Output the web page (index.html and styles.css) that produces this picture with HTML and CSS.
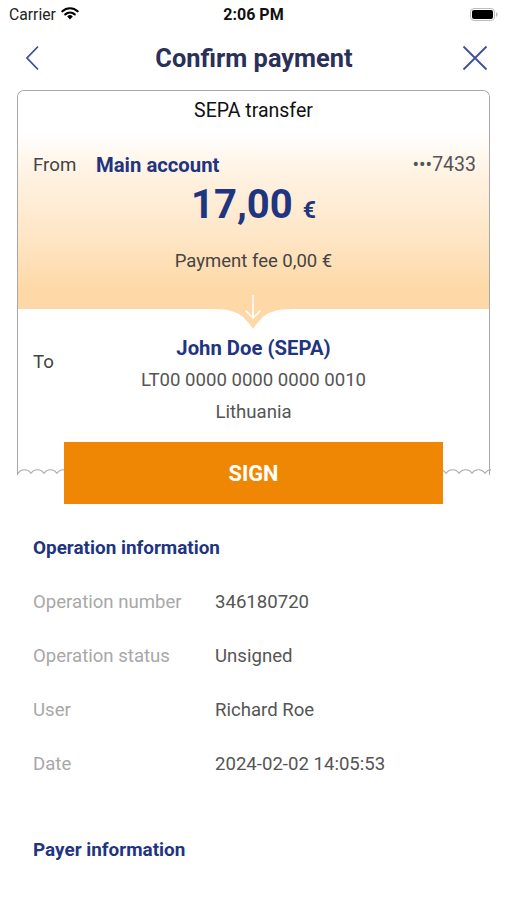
FILE: index.html
```html
<!DOCTYPE html>
<html lang="en">
<head>
<meta charset="utf-8">
<title>Confirm payment</title>
<link rel="stylesheet" href="styles.css">
</head>
<body>
<div class="screen">
  <div class="status-bar">
    <div class="status-left">
      <span class="carrier">Carrier</span>
      <svg class="wifi" width="18" height="13" viewBox="0 0 18 13">
        <path d="M9 12.5 L6.2 9.4 A4 4 0 0 1 11.8 9.4 Z" fill="#000"/>
        <path d="M4.3 7.4 A6.8 6.8 0 0 1 13.7 7.4" fill="none" stroke="#000" stroke-width="2.2" stroke-linecap="round"/>
        <path d="M1.4 4.3 A11 11 0 0 1 16.6 4.3" fill="none" stroke="#000" stroke-width="2.2" stroke-linecap="round"/>
      </svg>
    </div>
    <div class="status-time">2:06 PM</div>
    <div class="status-right">
      <svg width="28" height="13" viewBox="0 0 28 13">
        <rect x="0.5" y="0.5" width="24" height="12" rx="3.5" fill="none" stroke="#bdbdbd" stroke-width="1"/>
        <rect x="2" y="2" width="21" height="9" rx="2" fill="#000"/>
        <path d="M26 4.3 a1.6 2.2 0 0 1 0 4.4 z" fill="#bdbdbd"/>
      </svg>
    </div>
  </div>

  <div class="nav">
    <svg class="nav-icon" width="24" height="26" viewBox="0 0 24 26">
      <path d="M16 1.5 L5 13 L16 24.5" fill="none" stroke="#3f4d9a" stroke-width="1.8"/>
    </svg>
    <h1 class="nav-title">Confirm payment</h1>
    <svg class="nav-icon" width="26" height="26" viewBox="0 0 26 26">
      <path d="M1.5 1.5 L24.5 24.5 M24.5 1.5 L1.5 24.5" fill="none" stroke="#3f4d9a" stroke-width="1.8"/>
    </svg>
  </div>

  <div class="card">
    <div class="card-top">
      <div class="card-type">SEPA transfer</div>
      <div class="from-row">
        <span class="from-label">From</span>
        <span class="from-account">Main account</span>
        <span class="from-number">•••7433</span>
      </div>
      <div class="amount">17,00 <span class="currency">€</span></div>
      <div class="fee">Payment fee 0,00 €</div>
    </div>
    <div class="card-bottom">
      <svg class="notch" width="80" height="36" viewBox="0 0 80 36">
        <path d="M0 14 C16 14 26 17 32 24 Q37 29 40 34 Q43 29 48 24 C54 17 64 14 80 14 Z" fill="#fed8a6"/>
        <path d="M40 0 V23 M32.5 15.5 L40 23 L47.5 15.5" fill="none" stroke="#ffffff" stroke-width="1.5"/>
      </svg>
      <div class="to-grid">
        <span class="to-label">To</span>
        <div class="recipient">
          <div class="recipient-name">John Doe (SEPA)</div>
          <div class="recipient-line">LT00 0000 0000 0000 0010</div>
          <div class="recipient-line">Lithuania</div>
        </div>
        <span></span>
      </div>
    </div>
    <svg class="wave" width="475" height="8" viewBox="0 0 475 8">
      <defs>
        <pattern id="wv" width="13" height="8" patternUnits="userSpaceOnUse" x="1">
          <path d="M0 6.5 C3 1.5 10 1.5 13 6.5" fill="none" stroke="#a8a8a8" stroke-width="1.2"/>
        </pattern>
      </defs>
      <rect x="0" y="0" width="475" height="8" fill="url(#wv)"/>
    </svg>
  </div>

  <button class="sign-btn">SIGN</button>

  <section class="info">
    <h2 class="info-title">Operation information</h2>
    <div class="info-row"><span class="info-label">Operation number</span><span class="info-value">346180720</span></div>
    <div class="info-row"><span class="info-label">Operation status</span><span class="info-value">Unsigned</span></div>
    <div class="info-row"><span class="info-label">User</span><span class="info-value">Richard Roe</span></div>
    <div class="info-row"><span class="info-label">Date</span><span class="info-value">2024-02-02 14:05:53</span></div>
    <h2 class="info-title payer">Payer information</h2>
  </section>
</div>
</body>
</html>
```

FILE: styles.css
```css
* { box-sizing: border-box; }

html, body {
  margin: 0;
  padding: 0;
  background: #ffffff;
}

body {
  font-family: Roboto, "Liberation Sans", Arial, sans-serif;
  color: #333;
}

.screen {
  width: 507px;
  height: 900px;
  overflow: hidden;
  background: #fff;
}

/* status bar */
.status-bar {
  height: 28px;
  display: grid;
  grid-template-columns: 1fr auto 1fr;
  align-items: center;
  padding: 0 9px;
}
.status-left {
  display: flex;
  align-items: center;
  gap: 5px;
}
.carrier {
  font-size: 15.7px;
  color: #222;
}
.wifi { margin-top: -2px; }
.status-time {
  font-size: 16px;
  font-weight: 700;
  color: #111;
}
.status-right {
  display: flex;
  justify-content: flex-end;
}

/* nav */
.nav {
  height: 60px;
  display: flex;
  align-items: center;
  justify-content: space-between;
  padding: 0 19px 0 22px;
}
.nav-title {
  margin: 0;
  font-size: 25.4px;
  font-weight: 700;
  color: #2b3058;
}

/* card */
.card {
  margin: 2px 17px 0;
  border: 1.5px solid #a8a8a8;
  border-bottom: none;
  border-radius: 7px 7px 0 0;
  position: relative;
}
.card-top {
  border-radius: 6px 6px 0 0;
  background: linear-gradient(to bottom, #ffffff 0px, #ffffff 42px, #fff3e4 80px, #fee5c4 150px, #fed8a6 200px, #fed8a6 100%);
  padding: 10px 0 38px;
  text-align: center;
}
.card-type {
  font-size: 19.5px;
  line-height: 20px;
  color: #111;
}
.from-row {
  margin-top: 33px;
  display: flex;
  align-items: center;
  padding: 0 13px 0 15px;
  line-height: 22px;
}
.from-label {
  color: #444;
  width: 63px;
  font-size: 18.7px;
  text-align: left;
}
.from-account {
  color: #1f3580;
  font-weight: 700;
  font-size: 20.3px;
  flex: 1;
  text-align: left;
}
.from-number {
  color: #555;
  font-size: 19.5px;
}
.amount {
  margin-top: 6px;
  font-size: 40px;
  line-height: 46px;
  font-weight: 700;
  color: #1f3580;
}
.currency {
  font-size: 23px;
}
.fee {
  margin-top: 17px;
  font-size: 18.5px;
  line-height: 20px;
  color: #444;
}
.card-bottom {
  position: relative;
  padding: 23px 0 39px;
}
.notch {
  position: absolute;
  top: -14px;
  left: 50%;
  margin-left: -40.5px;
}
.to-grid {
  display: grid;
  grid-template-columns: 1fr auto 1fr;
}
.to-label {
  font-size: 18.7px;
  line-height: 22px;
  color: #444;
  padding: 19px 0 0 15px;
}
.recipient {
  text-align: center;
}
.recipient-name {
  font-size: 20.3px;
  line-height: 32px;
  font-weight: 700;
  color: #1f3580;
}
.recipient-line {
  font-size: 18.6px;
  line-height: 32px;
  color: #555;
}
.wave {
  display: block;
  width: calc(100% + 3px);
  margin: 0 -1.5px;
}

.sign-btn {
  display: block;
  position: relative;
  width: 379px;
  height: 62px;
  margin: -33px 0 0 64px;
  border: none;
  background: #ef8704;
  color: #fff;
  font-family: Roboto, "Liberation Sans", Arial, sans-serif;
  font-size: 21.8px;
  font-weight: 700;
}

/* info */
.info {
  padding: 33px 33px 0;
}
.info-title {
  margin: 0;
  font-size: 18.9px;
  line-height: 22px;
  font-weight: 700;
  color: #1f3580;
}
.info-title.payer {
  margin-top: 48px;
}
.info-row {
  display: flex;
  align-items: center;
  height: 54px;
  font-size: 18.6px;
}
.info-row:first-of-type { margin-top: 16px; }
.info-label {
  width: 182px;
  color: #a8a8a8;
}
.info-value {
  color: #555;
}
```
